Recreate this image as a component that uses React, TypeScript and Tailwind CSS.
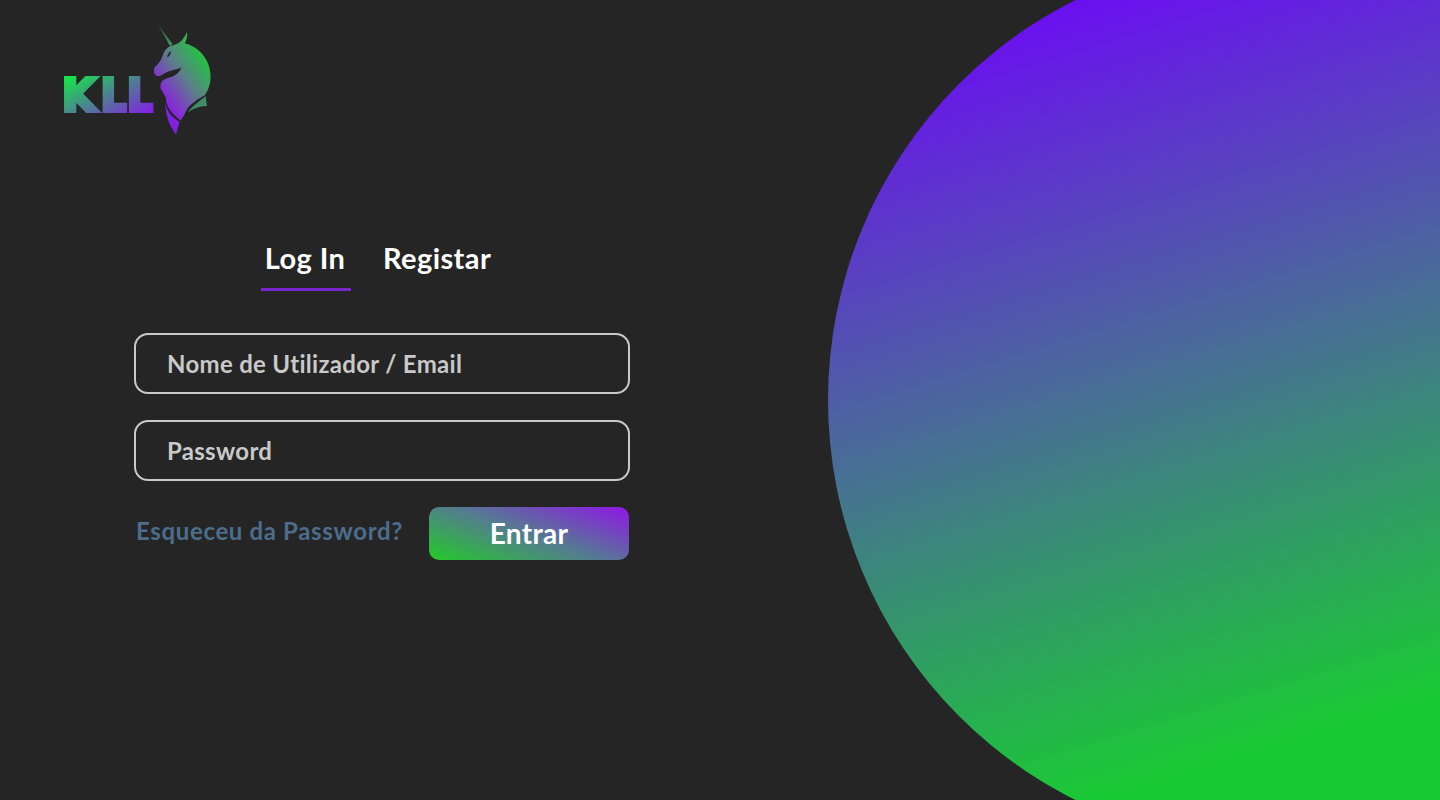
function Logo() {
  return (
    <div className="flex items-start">
      <span className="mt-[43px] flex h-[58px] w-[92px] items-center bg-[linear-gradient(150deg,#0ef23f_8%,#4f7d96_50%,#8a14ee_92%)] bg-clip-text font-['DejaVu_Sans',sans-serif] text-[44px] leading-[58px] font-bold whitespace-nowrap text-transparent [-webkit-text-stroke:4px_transparent]">
        <span className="tracking-[5px]">K</span>
        <span className="font-['DejaVu_Sans_Condensed','DejaVu_Sans',sans-serif] tracking-[1px]">LL</span>
      </span>
      {/* paths use page coordinates, the svg sits at 154,24 */}
      <svg viewBox="154 24 60 112" className="h-[112px] w-[60px] shrink-0">
        <defs>
          <linearGradient id="uni" gradientUnits="userSpaceOnUse" x1="210" y1="60" x2="160" y2="95">
            <stop offset="0" stopColor="#1fc93a" />
            <stop offset="0.5" stopColor="#5c7f8a" />
            <stop offset="1" stopColor="#8a1fe0" />
          </linearGradient>
          <linearGradient id="horn" gradientUnits="userSpaceOnUse" x1="157" y1="23" x2="172" y2="45">
            <stop offset="0" stopColor="#2b3a30" />
            <stop offset="1" stopColor="#3fa060" />
          </linearGradient>
        </defs>
        <path d="M157 23 L172.5 44 L170 46 Z" fill="url(#horn)" />
        <path
          fill="url(#uni)"
          d="M187 32 C187.5 36 186.5 40 185 43.5 C197 46 210 58 210.5 75 C211 84 208 90 205 95 C197 100 190 104 186.5 110 C185 114 183 117 180.5 120.5 C175 116 168 110 166 101 C167 97 162 92 160.5 88 C160 82 163 80 165 79 C171 77 178 76 181.5 67.5 C176 70 170 70 165 73 C161 76 158 77 156 75.5 C153.5 74 153 70 155 67 C158 64 161 61 162.5 56 C164 51 167 47 172 45.5 C178 44.5 184 40 187 32 Z"
        />
        <path fill="#252525" d="M167 57.5 C167.5 54.5 169 52 171 51 C171 54 169.5 56.5 167 57.5 Z" />
        <path fill="#8020e0" d="M165.5 103 C167 112 172 117 179.5 122 C178.5 126 177 130 176 134.5 C170 127 165 115 165.5 103 Z" />
        <path fill="#3e8d68" d="M187.5 112.5 C192 106 200 101 205.5 96 L207 106 C199 106 193 109 187.5 112.5 Z" />
      </svg>
    </div>
  )
}

function Field({ label }: { label: string }) {
  return (
    <div className="flex h-[61px] w-[496px] items-center rounded-[14px] border-2 border-[#c9c9c9] pl-[31px] text-[24px] font-bold tracking-[0.3px] text-[#c9c9c9]">
      {label}
    </div>
  )
}

export default function App() {
  return (
    <div className="relative h-[800px] w-[1440px] overflow-hidden bg-[#252525] font-['Lato',sans-serif]">
      <div className="absolute top-[-47px] left-[828px] h-[894px] w-[894px] rounded-full bg-[linear-gradient(163deg,#7000ff_5%,#4a6a9a_43%,#19cb33_80%)]" />
      <div className="flex flex-col">
        <div className="pt-[24px] pl-[62px]">
          <Logo />
        </div>
        <div className="mt-[102px] ml-[134px] flex w-[497px] flex-col">
          <div className="ml-[127px] flex gap-[32px] text-[29px] font-bold tracking-[0.4px] text-white">
            <div className="flex w-[90px] flex-col items-center">
              <span className="pr-[2px] leading-[40px]">Log In</span>
              <div className="mt-[10px] h-[3px] w-[90px] bg-[#7a26cf]" />
            </div>
            <span className="leading-[40px]">Registar</span>
          </div>
          <div className="mt-[42px] flex flex-col gap-[26px]">
            <Field label="Nome de Utilizador / Email" />
            <Field label="Password" />
          </div>
          <div className="mt-[26px] flex items-center justify-between pr-[2px]">
            <span className="mb-[6px] ml-[2px] text-[24px] font-bold tracking-[0.65px] text-[#4c6d8c]">Esqueceu da Password?</span>
            <button className="h-[53px] w-[200px] rounded-[10px] bg-[linear-gradient(20deg,#28c233_5%,#557a92_50%,#8a1fe0_95%)] pb-[2px] text-[28px] font-bold tracking-[0.3px] text-white">
              Entrar
            </button>
          </div>
        </div>
      </div>
    </div>
  )
}
